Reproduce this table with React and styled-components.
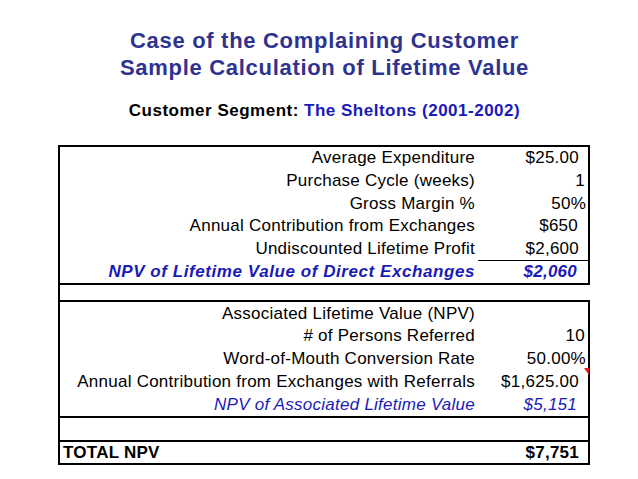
import React from "react";
import styled, { createGlobalStyle } from "styled-components";

const Global = createGlobalStyle`
  html, body { margin: 0; padding: 0; background: #ffffff; }
  body { font-family: "Liberation Sans", Arial, sans-serif; }
`;

const Page = styled.div`
  width: 638px;
  height: 479px;
  box-sizing: border-box;
  padding-top: 27px;
  background: #ffffff;
  overflow: hidden;
`;

const Header = styled.header`
  padding-left: 11px;
  display: flex;
  flex-direction: column;
  align-items: center;
`;

const Title = styled.h1`
  margin: 0;
  text-align: center;
  font-size: 22px;
  line-height: 27px;
  font-weight: bold;
  letter-spacing: 0.7px;
  color: #2f3390;
`;

const Segment = styled.div`
  margin-top: 20px;
  text-align: center;
  font-size: 17px;
  line-height: 20px;
  font-weight: bold;
  letter-spacing: 0.5px;
  color: #000000;
`;

const Blue = styled.span`
  color: #1a1ab8;
`;

const Sheet = styled.div`
  margin: 24px 0 0 58px;
  width: 532px;
  display: flex;
  flex-direction: column;
`;

const Block = styled.div`
  border: 2px solid #000000;
  display: flex;
  flex-direction: column;
`;

const Spacer = styled.div`
  height: 15px;
  border-left: 2px solid #000000;
`;

const Row = styled.div`
  display: grid;
  grid-template-columns: 1fr 110px;
  height: ${(p) => p.$h || 22.7}px;
  border-top: ${(p) => (p.$ruled ? "2px solid #000000" : "none")};
  box-sizing: border-box;
  font-size: 17px;
  letter-spacing: ${(p) => (p.$bold && p.$italic ? 0.57 : 0.25)}px;
  color: ${(p) => (p.$blue ? "#1a1ab8" : "#000000")};
  font-weight: ${(p) => (p.$bold ? "bold" : "normal")};
  font-style: ${(p) => (p.$italic ? "italic" : "normal")};
`;

const Label = styled.div`
  display: flex;
  align-items: center;
  justify-content: ${(p) => (p.$left ? "flex-start" : "flex-end")};
  padding: ${(p) => (p.$left ? "0 0 0 3px" : "0 3px 0 0")};
  white-space: nowrap;
`;

const Value = styled.div`
  position: relative;
  display: flex;
  align-items: center;
  justify-content: flex-end;
  padding-right: ${(p) => p.$pad ?? 3}px;
  border-top: ${(p) => (p.$rule ? "1.5px solid #000000" : "none")};
  letter-spacing: 0.25px;
  white-space: nowrap;
`;

const CommentMark = styled.span`
  position: absolute;
  top: -3px;
  right: -1px;
  width: 0;
  height: 0;
  border-top: 7px solid #d81e1e;
  border-left: 5px solid transparent;
`;

const direct = [
  ["Average Expenditure", "$25.00", 9],
  ["Purchase Cycle (weeks)", "1", 3],
  ["Gross Margin %", "50%", 2],
  ["Annual Contribution from Exchanges", "$650", 10],
  ["Undiscounted Lifetime Profit", "$2,600", 9],
];

const referral = [
  ["Associated Lifetime Value (NPV)", "", 3],
  ["# of Persons Referred", "10", 3],
  ["Word-of-Mouth Conversion Rate", "50.00%", 2],
];

export default function App() {
  return (
    <Page>
      <Global />
      <Header>
        <Title>
          Case of the Complaining Customer
          <br />
          Sample Calculation of Lifetime Value
        </Title>
        <Segment>
          Customer Segment: <Blue>The Sheltons (2001-2002)</Blue>
        </Segment>
      </Header>
      <Sheet>
        <Block>
          {direct.map(([l, v, p]) => (
            <Row key={l}>
              <Label>{l}</Label>
              <Value $pad={p}>{v}</Value>
            </Row>
          ))}
          <Row $blue $bold $italic>
            <Label>NPV of Lifetime Value of Direct Exchanges</Label>
            <Value $pad={11} $rule>
              $2,060
            </Value>
          </Row>
        </Block>
        <Spacer />
        <Block>
          {referral.map(([l, v, p]) => (
            <Row key={l} $h={22.8}>
              <Label>{l}</Label>
              <Value $pad={p}>{v}</Value>
            </Row>
          ))}
          <Row $h={22.8}>
            <Label>Annual Contribution from Exchanges with Referrals</Label>
            <Value $pad={9}>
              $1,625.00
              <CommentMark />
            </Value>
          </Row>
          <Row $blue $italic $h={22.8}>
            <Label>NPV of Associated Lifetime Value</Label>
            <Value $pad={11}>$5,151</Value>
          </Row>
          <Row $ruled $h={24} />
          <Row $ruled $bold $h={23}>
            <Label $left>TOTAL NPV</Label>
            <Value $pad={9}>$7,751</Value>
          </Row>
        </Block>
      </Sheet>
    </Page>
  );
}
